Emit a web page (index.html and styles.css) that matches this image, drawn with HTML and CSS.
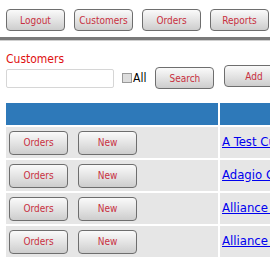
FILE: index.html
```html
<!DOCTYPE html>
<html>
<head>
<meta charset="utf-8">
<link rel="stylesheet" href="styles.css">
</head>
<body>
<div class="nav">
  <button class="btn nav-btn">Logout</button>
  <button class="btn nav-btn">Customers</button>
  <button class="btn nav-btn">Orders</button>
  <button class="btn nav-btn">Reports</button>
</div>
<div class="rule"></div>
<div class="page">
  <div class="title">Customers</div>
  <div class="search">
    <input class="field" type="text">
    <label class="all"><span class="chk"></span>All</label>
    <button class="btn search-btn">Search</button>
    <button class="btn add-btn">Add</button>
  </div>
  <table class="grid">
    <colgroup><col class="col1"><col class="col2"></colgroup>
    <tr class="head"><th></th><th></th></tr>
    <tr><td class="c1"><div class="acts"><button class="btn row-btn">Orders</button><button class="btn row-btn">New</button></div></td><td class="c2"><a href="#">A Test Customer</a></td></tr>
    <tr><td class="c1"><div class="acts"><button class="btn row-btn">Orders</button><button class="btn row-btn">New</button></div></td><td class="c2"><a href="#">Adagio Customer</a></td></tr>
    <tr><td class="c1"><div class="acts"><button class="btn row-btn">Orders</button><button class="btn row-btn">New</button></div></td><td class="c2"><a href="#">Alliance Inc</a></td></tr>
    <tr><td class="c1"><div class="acts"><button class="btn row-btn">Orders</button><button class="btn row-btn">New</button></div></td><td class="c2"><a href="#">Alliance Ltd</a></td></tr>
  </table>
</div>
</body>
</html>
```
FILE: styles.css
```css
html, body {
  margin: 0;
  padding: 0;
  background: #fff;
  overflow: hidden;
  width: 270px;
  height: 258px;
}
body {
  font-family: "DejaVu Sans Condensed", "DejaVu Sans", sans-serif;
  font-size: 10px;
}
.btn {
  box-sizing: border-box;
  height: 22px;
  border: 1px solid #6e6e6e;
  border-radius: 4px;
  background: linear-gradient(#fafafa, #e4e4e4 50%, #cdcdcd);
  color: #c8303f;
  font-family: "DejaVu Sans Condensed", "DejaVu Sans", sans-serif;
  font-size: 10px;
  padding: 0;
  margin: 0;
  flex: none;
}
.nav {
  display: flex;
  gap: 9px;
  padding: 9px 0 0 6px;
  white-space: nowrap;
}
.nav-btn { width: 59px; }
.rule {
  margin-top: 6px;
  height: 3px;
  background: #7a7a7a;
  border-bottom: 1px solid #cfcfcf;
}
.page { padding: 0 0 0 6px; }
.title {
  color: #e01010;
  font-size: 12px;
  margin-top: 10px;
  height: 16px;
  line-height: 16px;
}
.search {
  display: flex;
  align-items: center;
  white-space: nowrap;
  height: 22px;
}
.field {
  box-sizing: border-box;
  width: 108px;
  height: 19px;
  border: 1px solid #d6d6d6;
  border-radius: 2px;
  margin: 0;
  padding: 0;
}
.all {
  display: flex;
  align-items: center;
  margin-left: 8px;
  font-size: 12px;
  color: #000;
}
.chk {
  box-sizing: border-box;
  width: 10px;
  height: 10px;
  border: 1px solid #999;
  background: #ddd;
  margin-right: 1px;
}
.search-btn { width: 59px; margin-left: 9px; }
.add-btn { width: 59px; margin-left: 10px; position: relative; top: -2px; }
.grid {
  table-layout: fixed;
  border-collapse: collapse;
  margin-top: 14px;
  width: 300px;
}
.col1 { width: 213px; }
.col2 { width: 87px; }
.grid th, .grid td {
  padding: 0;
  border-bottom: 2px solid #fff;
  border-right: 2px solid #fff;
}
.grid .head th {
  background: #2e79b9;
  height: 22px;
}
.grid td {
  background: #e6e6e6;
  height: 31px;
  vertical-align: middle;
}
.acts {
  display: flex;
  gap: 10px;
  padding-left: 3px;
}
.row-btn { width: 59px; height: 24px; }
.grid td.c2 { vertical-align: top; }
.c2 a {
  display: block;
  margin: 7px 0 0 2px;
  color: #0000ee;
  font-family: "DejaVu Sans Condensed", "DejaVu Sans", sans-serif;
  font-size: 13px;
  white-space: nowrap;
}
```
